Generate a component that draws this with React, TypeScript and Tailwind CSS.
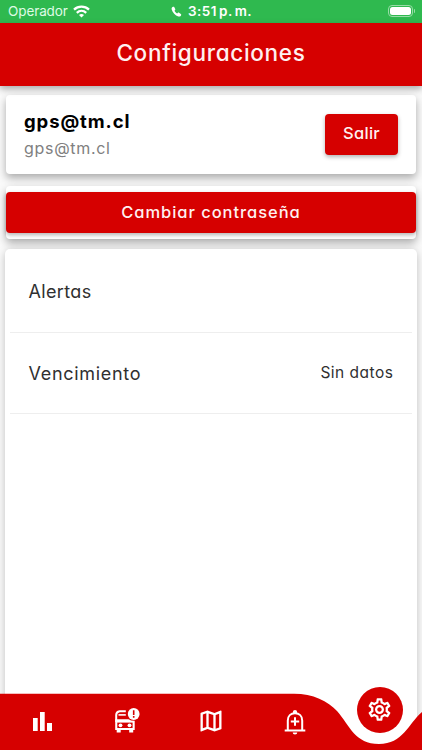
import React from "react";
import { MdOutlineMap, MdOutlineSettings } from "react-icons/md";

function StatusBar() {
  return (
    <header className="flex h-[22.5px] shrink-0 items-center justify-between bg-[#2fb94f] pl-2 pr-[7px] text-white">
      <div className="flex w-[130px] items-center gap-[5px]">
        <span className="text-[13.5px] leading-[22px] tracking-[-0.1px] text-[#dffbe5] [font-feature-settings:normal]">Operador</span>
        <svg width="17" height="13" viewBox="0 0 17 13" fill="none" stroke="currentColor" strokeWidth="2.3">
          <path d="M1 4.7C5.2.7 11.8.7 16 4.7" />
          <path d="M3.8 7.8C6.5 5.3 10.5 5.3 13.2 7.8" />
          <path d="M8.5 12.4 6 9.9c1.4-1.2 3.6-1.2 5 0Z" fill="currentColor" stroke="none" />
        </svg>
      </div>
      <div className="flex items-center gap-[6px]">
        <svg width="11" height="11" viewBox="0 0 11 11" fill="currentColor">
          <path d="M2.3.7C1 .9.3 2 .7 3.5c.9 3.3 3.5 6 6.7 6.9 1.3.3 2.4-.2 2.8-1.5.1-.4 0-.7-.4-1L8 6.700c-.4-.3-.8-.2-1.1.1l-.7.7C5 6.900 4 5.800 3.500 4.700l.6-.7c.3-.3.3-.7.1-1.1L3.200 1C3 .7 2.700.6 2.300.7Z" />
        </svg>
        <span className="whitespace-nowrap text-[13.5px] font-semibold leading-[22px] tracking-[0.4px] [font-feature-settings:normal] [word-spacing:-1.5px]">3:51 p. m.</span>
      </div>
      <div className="flex w-[130px] items-center justify-end gap-px">
        <div className="h-[12px] w-[25px] rounded-[4px] border border-[#98dca7] p-[1px]">
          <div className="h-full w-full rounded-[2.5px] bg-white" />
        </div>
        <div className="h-[4px] w-[1px] rounded-r bg-[#98dca7]" />
      </div>
    </header>
  );
}

function BusAlertIcon() {
  return (
    <svg width="26" height="26" viewBox="0 0 26 26" fill="none">
      <path d="M11.800 3.200H5.600Q2.200 3.700 2.200 7V14" stroke="#fff" strokeWidth="2" />
      <path d="M4.500 6.900H11.800" stroke="#fff" strokeWidth="1.600" />
      <path d="M1.200 11.200H14.500Q16.500 12.800 20.700 12.800V22H19.200V24.500H15.200V22H6.700V24.500H2.700V22H1.200Z" fill="#fff" />
      <path d="M3.300 14.600H18.600V20H3.300Z" fill="#d60000" />
      <circle cx="6.500" cy="17.300" r="1.900" fill="#fff" />
      <circle cx="15.500" cy="17.300" r="1.900" fill="#fff" />
      <circle cx="19.700" cy="6" r="5.900" fill="#fff" />
      <path d="M19.700 2.300v4.600M19.700 8.100v1.700" stroke="#d60000" strokeWidth="1.600" />
    </svg>
  );
}

function BellPlusIcon() {
  return (
    <svg width="22" height="26" viewBox="0 0 22 26" fill="none" stroke="#fff" strokeWidth="2">
      <path d="M3.800 21V11.500C3.800 6.800 6.800 4.300 11 4.300s7.200 2.500 7.200 7.200V21" />
      <path d="M.7 21.500H21.300" />
      <path d="M11 8.300v8.400M6.800 12.500h8.400" />
      <path d="M8.900 4.500V3a2.100 2.100 0 0 1 4.200 0V4.500ZM8.700 23.500h4.600a2.300 2.100 0 0 1-4.600 0Z" fill="#fff" stroke="none" />
    </svg>
  );
}

function BottomNav() {
  return (
    <nav className="absolute inset-x-0 bottom-0 h-[64px]">
      <svg className="absolute inset-0" width="422" height="64" viewBox="0 0 422 64">
        <path d="M294 7.700C313 7.700 328 15 337 25C350 40 355 58 379 58C403 58 408 38 417 31V7.700Z" fill="#fff" />
        <path d="M0 7.700H294C313 7.700 328 15 337 25C350 40 355 58 379 58C403 58 408 38 422 26V64H0Z" fill="#d60000" />
      </svg>
      <div className="relative flex h-full items-center pl-[33px] text-white">
        <button className="mt-[7px] w-[81px]">
          <svg width="19" height="19" viewBox="0 0 19 19" fill="currentColor">
            <path d="M0 6h4.700v13H0ZM7 0h4.700v19H7ZM14 11h5v8h-5Z" />
          </svg>
        </button>
        <button className="mt-[6px] w-[83px]"><BusAlertIcon /></button>
        <button className="mt-[6px] w-[87px]"><MdOutlineMap className="size-[28px]" /></button>
        <button className="mt-[7px]"><BellPlusIcon /></button>
      </div>
      <button className="absolute left-[356.5px] top-[0.5px] flex size-[46px] items-center justify-center rounded-full bg-[#d60000] text-white">
        <MdOutlineSettings className="size-[27px]" />
      </button>
    </nav>
  );
}

export default function App() {
  return (
    <div className="relative flex h-[750px] w-[422px] flex-col overflow-hidden bg-[#fafafa] font-['Inter',sans-serif] [font-feature-settings:'cv11']">
      <StatusBar />
      <div className="relative flex h-[63px] shrink-0 items-center justify-center bg-[#d60000] pb-[3px] shadow-[0_3px_7px_rgba(0,0,0,0.32)]">
        <h1 className="text-[22.5px] font-[450] tracking-[0.7px] text-[#fff0f0]">Configuraciones</h1>
      </div>
      <main className="flex flex-1 flex-col">
        <section className="mx-[6px] mt-[9.5px] flex h-[79px] items-center justify-between rounded-[4px] bg-white pl-[18px] pr-[18px] shadow-[0_4px_8px_rgba(0,0,0,0.32)]">
          <div>
            <p className="text-[18.5px] font-bold leading-[28px] tracking-[0.9px] text-black">gps@tm.cl</p>
            <p className="text-[16px] leading-[27px] tracking-[0.7px] text-[#808080]">gps@tm.cl</p>
          </div>
          <button className="h-[41px] w-[73px] rounded-[4px] bg-[#d60000] pb-[2px] text-[16.5px] font-[450] tracking-[0.3px] text-[#fff0f0] shadow-[0_2px_4px_rgba(0,0,0,0.3)]">Salir</button>
        </section>
        <section className="mx-[6px] mt-[12px] h-[53px] rounded-[4px] bg-white pt-[6px] shadow-[0_4px_8px_rgba(0,0,0,0.32)]">
          <button className="h-[41px] w-full rounded-[4px] bg-[#d60000] pb-[1px] text-[16.5px] font-[450] tracking-[0.95px] text-[#fff0f0] shadow-[0_2px_4px_rgba(0,0,0,0.3)]">Cambiar contraseña</button>
        </section>
        <section className="mx-[5px] mt-[10px] flex-1 rounded-t-[5px] bg-white px-[5px] shadow-[0_2px_8px_rgba(0,0,0,0.24)]">
          <div className="flex h-[83.5px] items-center border-b border-[#eeeeee] px-[18.5px] pt-[2px] text-[#303030]">
            <span className="text-[18px] tracking-[0.35px]">Alertas</span>
          </div>
          <div className="flex h-[81px] items-center justify-between border-b border-[#eeeeee] px-[18.5px] pt-[1px] text-[#303030]">
            <span className="text-[18px] tracking-[0.7px]">Vencimiento</span>
            <span className="text-[15.5px] tracking-[0.5px]">Sin datos</span>
          </div>
        </section>
      </main>
      <BottomNav />
    </div>
  );
}
